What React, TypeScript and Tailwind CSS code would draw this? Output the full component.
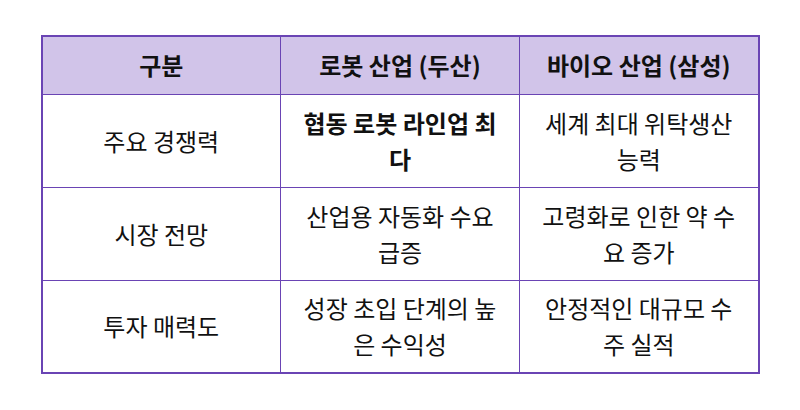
import * as React from "react";

const rows: { label: string; robot: string; bio: string; bold?: boolean }[] = [
  { label: "주요 경쟁력", robot: "협동 로봇 라인업 최다", bio: "세계 최대 위탁생산 능력", bold: true },
  { label: "시장 전망", robot: "산업용 자동화 수요 급증", bio: "고령화로 인한 약 수요 증가" },
  { label: "투자 매력도", robot: "성장 초입 단계의 높은 수익성", bio: "안정적인 대규모 수주 실적" },
];

export default function App() {
  return (
    <div
      className="w-[800px] h-[410px] bg-white pt-[35px]"
      style={{ fontFamily: '"Noto Sans CJK KR", "Noto Sans", sans-serif' }}
    >
      <table className="mx-auto w-[719px] table-fixed border-collapse border-2 border-[#6a44b4] text-[24px] text-[#111] text-center">
        <thead>
          <tr className="bg-[#d1c4e9] h-[58px]">
            <th className="border border-[#6a44b4] font-bold px-[19px]">구분</th>
            <th className="border border-[#6a44b4] font-bold px-[19px]">로봇 산업 (두산)</th>
            <th className="border border-[#6a44b4] font-bold px-[19px]">바이오 산업 (삼성)</th>
          </tr>
        </thead>
        <tbody>
          {rows.map((r) => (
            <tr key={r.label} className="h-[93px]">
              <td className="border border-[#6a44b4] px-[19px] leading-[36px]">{r.label}</td>
              <td
                className={
                  r.bold
                    ? "border border-[#6a44b4] px-[19px] leading-[36px] font-bold"
                    : "border border-[#6a44b4] px-[19px] leading-[36px]"
                }
              >
                {r.robot}
              </td>
              <td className="border border-[#6a44b4] px-[19px] leading-[36px]">{r.bio}</td>
            </tr>
          ))}
        </tbody>
      </table>
    </div>
  );
}
